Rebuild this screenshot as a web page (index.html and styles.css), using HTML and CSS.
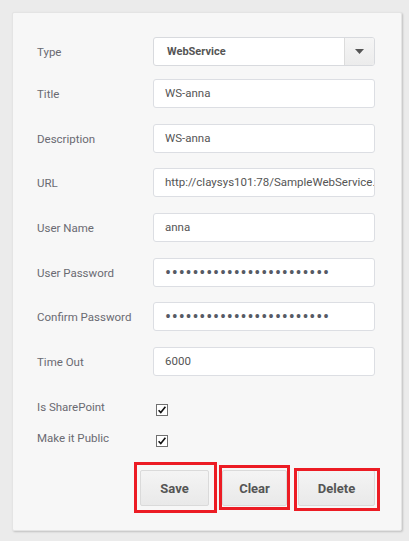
FILE: index.html
```html
<!DOCTYPE html>
<html>
<head>
<meta charset="utf-8">
<link rel="stylesheet" href="styles.css">
</head>
<body>
<div class="card">
  <div class="row gap13">
    <div class="label">Type</div>
    <div class="select">
      <span class="select-text">WebService</span>
      <span class="select-btn"><svg width="9" height="5" viewBox="0 0 9 5"><path d="M0 0H9L4.5 5Z" fill="#555"/></svg></span>
    </div>
  </div>
  <div class="row">
    <div class="label">Title</div>
    <div class="field">WS-anna</div>
  </div>
  <div class="row gap15">
    <div class="label">Description</div>
    <div class="field">WS-anna</div>
  </div>
  <div class="row">
    <div class="label">URL</div>
    <div class="field">http://claysys101:78/SampleWebService.</div>
  </div>
  <div class="row">
    <div class="label">User Name</div>
    <div class="field">anna</div>
  </div>
  <div class="row gap15">
    <div class="label">User Password</div>
    <div class="field dots">••••••••••••••••••••••••</div>
  </div>
  <div class="row">
    <div class="label">Confirm Password</div>
    <div class="field dots">••••••••••••••••••••••••</div>
  </div>
  <div class="row last">
    <div class="label">Time Out</div>
    <div class="field">6000</div>
  </div>
  <div class="check-row">
    <div class="label">Is SharePoint</div>
    <svg class="checkbox" width="12" height="12" viewBox="0 0 12 12"><rect x="0.5" y="0.5" width="11" height="11" fill="#fff" stroke="#707070"/><path d="M2.6 6.2L4.8 8.6L9.4 2.8" fill="none" stroke="#111" stroke-width="1.6"/></svg>
  </div>
  <div class="check-row">
    <div class="label">Make it Public</div>
    <svg class="checkbox" width="12" height="12" viewBox="0 0 12 12"><rect x="0.5" y="0.5" width="11" height="11" fill="#fff" stroke="#707070"/><path d="M2.6 6.2L4.8 8.6L9.4 2.8" fill="none" stroke="#111" stroke-width="1.6"/></svg>
  </div>
  <div class="actions">
    <button class="btn btn-save">Save<span class="mark mark-save"></span></button>
    <button class="btn btn-clear">Clear<span class="mark mark-clear"></span></button>
    <button class="btn btn-delete">Delete<span class="mark mark-delete"></span></button>
  </div>
</div>
</body>
</html>
```
FILE: styles.css
```css
html, body {
  margin: 0;
  padding: 0;
}
body {
  background: #ebebeb;
  padding: 12px;
  font-family: Roboto, "Liberation Sans", sans-serif;
  font-size: 11.5px;
  color: #666;
}
.card {
  box-sizing: border-box;
  width: 390px;
  height: 519px;
  background: #f7f7f7;
  border: 1px solid #e4e4e4;
  border-radius: 2px;
  box-shadow: 1px 1px 2px rgba(0,0,0,0.18);
  padding: 24px 26px 0 24px;
}
.row {
  display: flex;
  align-items: center;
  height: 29px;
  margin-bottom: 16px;
}
.row.gap13 { margin-bottom: 13px; }
.row.gap15 { margin-bottom: 15px; }
.row.last { margin-bottom: 23px; }
.label {
  width: 116px;
  flex: none;
  color: #6a6a72;
}
.field {
  box-sizing: border-box;
  width: 222px;
  height: 29px;
  background: #fff;
  border: 1px solid #dcdee3;
  border-radius: 3px;
  padding: 0 0 0 11px;
  line-height: 27px;
  color: #555;
  white-space: nowrap;
  overflow: hidden;
}
.field.dots {
  font-size: 18px;
  letter-spacing: 0.8px;
  color: #565a64;
}
.select {
  box-sizing: border-box;
  width: 222px;
  height: 29px;
  display: flex;
  background: #fff;
  border: 1px solid #d8dade;
  border-radius: 3px;
  overflow: hidden;
}
.select-text {
  flex: 1;
  padding-left: 13px;
  line-height: 27px;
  font-weight: bold;
  font-size: 11px;
  color: #555;
}
.select-btn {
  width: 29px;
  display: flex;
  align-items: center;
  justify-content: center;
  border-left: 1px solid #dcdcdc;
  background: linear-gradient(#f5f5f5, #ececec);
}
.check-row {
  display: flex;
  align-items: flex-start;
  height: 20px;
  margin-bottom: 11px;
}
.check-row .label {
  line-height: 16px;
}
.checkbox {
  margin-top: 5px;
  margin-left: 3px;
}
.actions {
  display: flex;
  justify-content: flex-end;
  margin-top: 20px;
}
.btn {
  position: relative;
  box-sizing: border-box;
  height: 36px;
  padding: 0;
  border: 1px solid #dadada;
  border-radius: 2px;
  background: linear-gradient(#f4f4f4, #e9e9e9);
  font-family: Roboto, "Liberation Sans", sans-serif;
  font-weight: bold;
  font-size: 13px;
  color: #555;
}
.btn-save { width: 69px; margin-right: 13px; }
.btn-clear { width: 65px; margin-right: 11px; }
.btn-delete { width: 77px; }
.mark {
  position: absolute;
  border: 3px solid #ec1c24;
  pointer-events: none;
}
.mark-save { left: -7px; right: -9px; top: -9px; bottom: -8px; }
.mark-clear { left: -4px; right: -4px; top: -6px; bottom: -5px; }
.mark-delete { left: -5px; right: -6px; top: -3px; bottom: -6px; }
```
